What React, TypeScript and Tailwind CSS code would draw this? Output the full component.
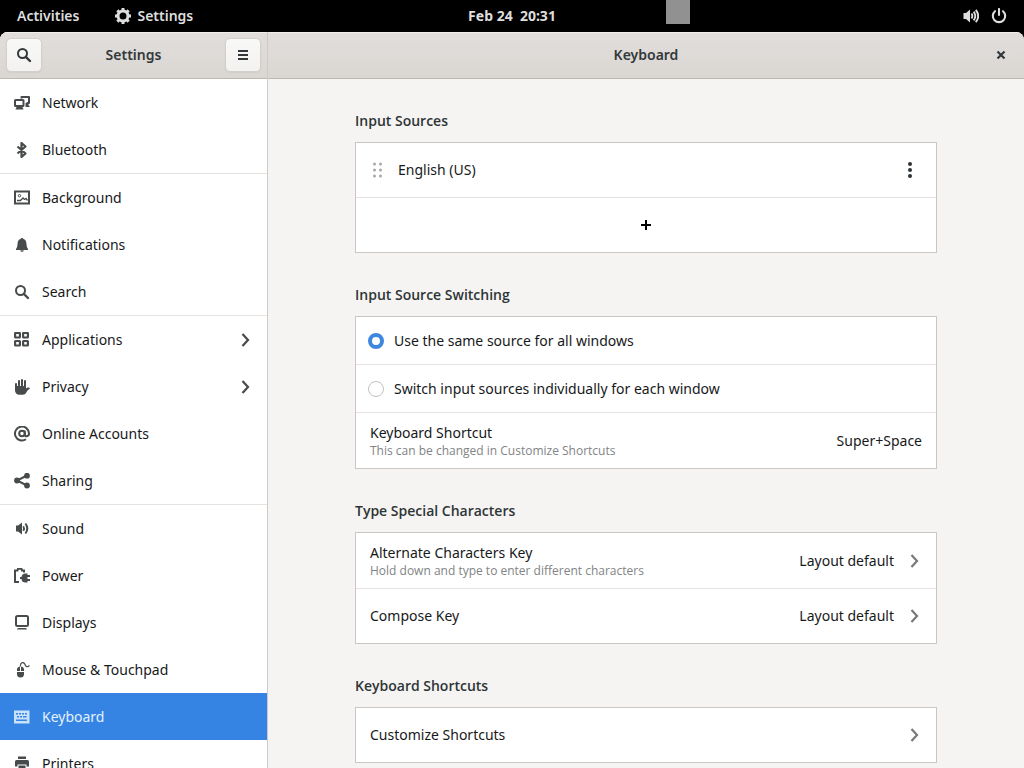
import { useState } from 'react';
import type { ReactNode } from 'react';

type IconProps = { children: ReactNode; className?: string };

function Icon({ children, className = '' }: IconProps) {
    return (
        <svg viewBox="0 0 16 16" width="16" height="16" fill="currentColor" aria-hidden="true" className={`shrink-0 ${className}`}>
            {children}
        </svg>
    );
}

const searchShape = (
    <>
        <circle cx="6.5" cy="6.5" r="4.5" fill="none" stroke="currentColor" strokeWidth="2" />
        <path d="M9.8 9.8l4.2 4.2" fill="none" stroke="currentColor" strokeWidth="2.4" strokeLinecap="round" />
    </>
);

const chevronShape = <path d="M5.5 2l5.500 6-5.500 6" fill="none" stroke="currentColor" strokeWidth="2.200" />;

const volumeShape = (
    <>
        <path d="M0.500 5H3L7 1.500v13L3 11H0.500z" />
        <path d="M8.500 5.500q1.800 2.500 0 5" fill="none" stroke="currentColor" strokeWidth="1.800" />
        <path d="M10.700 3.600q3.200 4.400 0 8.800M12.800 1.800q4.800 6.200 0 12.400" fill="none" stroke="currentColor" strokeWidth="1.900" />
    </>
);

const icons: Record<string, ReactNode> = {
    network: (
        <>
            <path d="M7.500 3.500V2H15v6h-2.500" fill="none" stroke="currentColor" strokeWidth="2" strokeLinejoin="round" />
            <path d="M11.500 8h3v2l1.500 2h-4.500z" />
            <rect x="1" y="5" width="8.500" height="6" rx="0.600" fill="none" stroke="currentColor" strokeWidth="2" />
            <path d="M3 11h5l1.500 3.500h-8z" />
        </>
    ),
    bluetooth: (
        <path d="M3.500 4.500l8 7L7.500 15V1l4 3.500-8 7" fill="none" stroke="currentColor" strokeWidth="2.200" strokeLinejoin="round" />
    ),
    background: (
        <>
            <path fillRule="evenodd" d="M0 0.500h16v14H0zM2 2.500v10h12v-10z" />
            <circle cx="5.500" cy="5.700" r="1.200" fill="none" stroke="currentColor" />
            <path d="M3 10.500h3.500L9 8l1.500 1.500 1.500-1 1.500 2" fill="none" stroke="currentColor" strokeWidth="1.300" />
        </>
    ),
    notifications: (
        <path d="M8 1a1.500 1.500 0 0 0-1.500 1C4 2.800 3.700 5 3.500 7.300 3.300 9.600 3 11 2 12v1h12v-1c-1-1-1.300-2.400-1.500-4.700C12.300 5 12 2.800 9.500 2A1.500 1.500 0 0 0 8 1zM6.300 13.300a1.700 1.500 0 0 0 3.400 0z" />
    ),
    search: searchShape,
    applications: (
        <g fill="none" stroke="currentColor" strokeWidth="2.200">
            <rect x="1.100" y="1" width="4.800" height="4.500" rx="0.400" />
            <rect x="9.100" y="1" width="4.800" height="4.500" rx="0.400" />
            <rect x="1.100" y="9" width="4.800" height="4.500" rx="0.400" />
            <rect x="9.100" y="9" width="4.800" height="4.500" rx="0.400" />
        </g>
    ),
    privacy: (
        <>
            <path d="M2 5V11M5 2V9M8 1V9M11 2V10" fill="none" stroke="currentColor" strokeWidth="2" strokeLinecap="round" />
            <path d="M1 7H12v2.500c1-1 2.300-1.400 3.500-.8.600.3.500 1 0 1.200-1.700.7-2.300 2-3.300 3.800-.7 1.300-1.800 2-3.400 2H5.500c-2.800 0-4.500-1.800-4.500-4.500z" />
        </>
    ),
    accounts: (
        <>
            <circle cx="8" cy="7.500" r="2.800" fill="none" stroke="currentColor" strokeWidth="2" />
            <path d="M10.800 4.500v4.200c0 2.600 4.200 2 4.200-1.200a7 7 0 1 0-3 5.800" fill="none" stroke="currentColor" strokeWidth="2" />
        </>
    ),
    sharing: (
        <>
            <path d="M13 2.500l-10 5 10 5" fill="none" stroke="currentColor" strokeWidth="2" />
            <circle cx="13" cy="2.700" r="2.900" />
            <circle cx="3" cy="7.500" r="2.900" />
            <circle cx="13" cy="12.500" r="2.900" />
        </>
    ),
    sound: (
        <>
            <path d="M2 4.500h2L8 1.500v12l-4-3H2z" />
            <path d="M9.300 5.200q1.500 2.300 0 4.600" fill="none" stroke="currentColor" strokeWidth="1.800" />
            <path d="M11.400 2.500q3.800 5 0 10" fill="none" stroke="currentColor" strokeWidth="2" />
        </>
    ),
    power: (
        <>
            <path d="M5 14H1V2.500h2.500L4 0.800h3.500L8 2.500h2V4.500" fill="none" stroke="currentColor" strokeWidth="2" />
            <path d="M13.500 5.500v9h-2a4 4 0 0 1-4-3.500H6V9h1.500a4 4 0 0 1 4-3.500z" />
            <path d="M13 7h3v2h-3zM13 11h3v2h-3z" />
        </>
    ),
    displays: (
        <>
            <rect x="2" y="1" width="12" height="10" rx="1.500" fill="none" stroke="currentColor" strokeWidth="2" />
            <path d="M4.500 13h7q1.500 0 1.500 1.500H3q0-1.500 1.500-1.500z" />
        </>
    ),
    mouse: (
        <>
            <path d="M3 9V7.500Q3 5 6 4.500V9zM7 4.500q3 .5 3 3V9H7zM3 10h7v2a3.500 3.500 0 0 1-7 0z" />
            <path d="M6.500 4.500C6 0 10 -0.500 11 2.500c.8 2.500 2.500 3 4.500 1" fill="none" stroke="currentColor" strokeWidth="1.200" />
        </>
    ),
    keyboard: (
        <path
            fillRule="evenodd"
            d="M0 1.500h15.500v13H0zM2 4v1.500h2V4zm3 0v1.500h2V4zm3 0v1.500h2V4zm3 0v1.500h2V4zM3 7v1.500h2V7zm3 0v1.500h2V7zm3 0v1.500h3.500V7zM2 10.500V12h11v-1.500z"
        />
    ),
    printers: (
        <path d="M4 0.500h8V3H4zM2.500 4h11A1.500 1.500 0 0 1 15 5.500v5h-2.500v-2h-9v2H1v-5A1.500 1.500 0 0 1 2.500 4zM4.500 9.500h7v5h-7z" />
    ),
};

const groups = [
    [
        { id: 'network', label: 'Network' },
        { id: 'bluetooth', label: 'Bluetooth' },
    ],
    [
        { id: 'background', label: 'Background' },
        { id: 'notifications', label: 'Notifications' },
        { id: 'search', label: 'Search' },
    ],
    [
        { id: 'applications', label: 'Applications', sub: true },
        { id: 'privacy', label: 'Privacy', sub: true },
        { id: 'accounts', label: 'Online Accounts' },
        { id: 'sharing', label: 'Sharing' },
    ],
    [
        { id: 'sound', label: 'Sound' },
        { id: 'power', label: 'Power' },
        { id: 'displays', label: 'Displays' },
        { id: 'mouse', label: 'Mouse & Touchpad' },
        { id: 'keyboard', label: 'Keyboard' },
        { id: 'printers', label: 'Printers' },
    ],
] as { id: string; label: string; sub?: boolean }[][];

function TopBar() {
    return (
        <header className="relative grid h-8 shrink-0 grid-cols-[1fr_auto_1fr] items-center bg-black px-[17px] font-semibold text-[#dedede]">
            <div className="flex items-center gap-9">
                <button>Activities</button>
                <button className="flex items-center gap-1.5">
                    <Icon>
                        <circle cx="8" cy="8" r="5" fill="none" stroke="currentColor" strokeWidth="3" />
                        <path
                            d="M8 0v3M8 13v3M0 8h3M13 8h3M2.340 2.340l2 2M11.660 11.660l2 2M2.340 13.660l2-2M11.660 4.340l2-2"
                            stroke="currentColor"
                            strokeWidth="3"
                        />
                    </Icon>
                    Settings
                </button>
            </div>
            <button className="font-bold whitespace-pre">Feb 24  20:31</button>
            <div className="flex items-center justify-end gap-3">
                <button aria-label="Volume"><Icon>{volumeShape}</Icon></button>
                <button aria-label="Power">
                    <Icon>
                        <path d="M4 3.200A6.200 6.200 0 1 0 12 3.200" fill="none" stroke="currentColor" strokeWidth="2.100" strokeLinecap="round" />
                        <path d="M8 1v6" stroke="currentColor" strokeWidth="2.100" strokeLinecap="round" />
                    </Icon>
                </button>
            </div>
            <div className="absolute top-0 left-[65%] h-6 w-6 bg-[#919191]" />
        </header>
    );
}

function HeaderButton({ label, children }: { label: string; children: ReactNode }) {
    return (
        <button
            aria-label={label}
            className="flex h-[34px] w-9 items-center justify-center rounded-[5px] border border-[#d3cfcb] bg-gradient-to-b from-[#f8f8f7] to-[#f3f2f1] shadow-xs"
        >
            <Icon>{children}</Icon>
        </button>
    );
}

function Section({ title, children }: { title: string; children: ReactNode }) {
    return (
        <section>
            <h2 className="mb-[11px] font-['Open_Sans',sans-serif] font-semibold text-[#2e3436]">{title}</h2>
            <div className="grid gap-px border border-[#c9c6c3] bg-[#e3e2e1] *:bg-white">{children}</div>
        </section>
    );
}

type RowProps = { title: string; hint?: string; value?: string; link?: boolean };

function Row({ title, hint, value, link }: RowProps) {
    const Tag = link ? 'button' : 'div';
    return (
        <Tag className={`flex w-full items-center gap-3 px-3.5 text-left ${hint ? 'h-[55px]' : 'h-[54px]'}`}>
            <span className="flex-1">
                <span className="block">{title}</span>
                {hint && <span className="block font-['Open_Sans',sans-serif] text-xs text-[#818485]">{hint}</span>}
            </span>
            {value && <span>{value}</span>}
            {link && <Icon className="text-[#76797b]">{chevronShape}</Icon>}
        </Tag>
    );
}

const modes = [
    { id: 'same', label: 'Use the same source for all windows' },
    { id: 'each', label: 'Switch input sources individually for each window' },
];

export default function App() {
    const [page, setPage] = useState('keyboard');
    const [mode, setMode] = useState('same');

    return (
        <div className="flex h-screen flex-col overflow-hidden bg-black font-['Noto_Sans',sans-serif] text-sm text-[#17191a]">
            <TopBar />

            <div className="flex min-h-0 flex-1 overflow-hidden rounded-t-lg bg-[#f5f4f2]">
                {/* Sidebar */}
                <aside className="flex w-[268px] shrink-0 flex-col border-r border-[#cdcac7] bg-white">
                    <div className="flex h-[47px] shrink-0 items-center border-b border-[#bfb8b1] bg-gradient-to-b from-[#e0dddb] to-[#dad7d3] px-1.5 text-[#33383a] inset-shadow-[0_1px_#efefed]">
                        <HeaderButton label="Search">{searchShape}</HeaderButton>
                        <h1 className="flex-1 text-center font-semibold">Settings</h1>
                        <HeaderButton label="Menu">
                            <path d="M3 3h10v2H3zM3 7h10v2H3zM3 11h10v2H3z" />
                        </HeaderButton>
                    </div>
                    <nav className="min-h-0 flex-1 divide-y divide-[#e3e2e1] overflow-y-auto [scrollbar-width:none]">
                        {groups.map((group, i) => (
                            <div key={i}>
                                {group.map((item) => (
                                    <a
                                        key={item.id}
                                        href={`#${item.id}`}
                                        onClick={() => setPage(item.id)}
                                        className={`flex h-[47px] items-center gap-3 px-3.5 ${page === item.id ? 'bg-[#3584e4] text-[#e3f1ff]' : ''}`}
                                    >
                                        <Icon className={page === item.id ? 'text-[#c9e2fb]' : 'text-[#484b4c]'}>{icons[item.id]}</Icon>
                                        <span className="flex-1">{item.label}</span>
                                        {item.sub && <Icon className="text-[#484b4c]">{chevronShape}</Icon>}
                                    </a>
                                ))}
                            </div>
                        ))}
                    </nav>
                </aside>

                {/* Panel */}
                <div className="flex min-w-0 flex-1 flex-col">
                    <div className="grid h-[47px] shrink-0 grid-cols-[1fr_auto_1fr] items-center border-b border-[#bfb8b1] bg-gradient-to-b from-[#e0dddb] to-[#dad7d3] px-[15px] text-[#33383a] inset-shadow-[0_1px_#efefed]">
                        <h1 className="col-start-2 font-semibold">Keyboard</h1>
                        <button aria-label="Close" className="justify-self-end">
                            <Icon>
                                <path d="M4.500 4.500l7 7M11.500 4.500l-7 7" stroke="currentColor" strokeWidth="2.200" />
                            </Icon>
                        </button>
                    </div>
                    <main className="min-h-0 flex-1 overflow-y-auto px-6 py-8 [scrollbar-width:none]">
                        <div className="mx-auto flex max-w-[582px] flex-col gap-8">
                            <Section title="Input Sources">
                                <div className="flex h-[54px] items-center gap-3 pr-[18px] pl-3.5">
                                    <Icon className="text-[#a5a7a8]">
                                        <circle cx="4.500" cy="2" r="1.500" />
                                        <circle cx="10.500" cy="2" r="1.500" />
                                        <circle cx="4.500" cy="8" r="1.500" />
                                        <circle cx="10.500" cy="8" r="1.500" />
                                        <circle cx="4.500" cy="14" r="1.500" />
                                        <circle cx="10.500" cy="14" r="1.500" />
                                    </Icon>
                                    <span className="flex-1">English (US)</span>
                                    <button aria-label="Source options" className="text-[#2e3436]">
                                        <Icon>
                                            <circle cx="8" cy="2" r="2" />
                                            <circle cx="8" cy="8" r="2" />
                                            <circle cx="8" cy="14" r="2" />
                                        </Icon>
                                    </button>
                                </div>
                                <button aria-label="Add input source" className="flex h-[54px] w-full items-center justify-center text-black">
                                    <Icon>
                                        <path d="M7 3h2v4h4v2H9v4H7V9H3V7h4z" />
                                    </Icon>
                                </button>
                            </Section>

                            <Section title="Input Source Switching">
                                {modes.map((m) => (
                                    <label key={m.id} className="flex h-[47px] items-center gap-2.5 px-3">
                                        <input
                                            type="radio"
                                            name="mode"
                                            checked={mode === m.id}
                                            onChange={() => setMode(m.id)}
                                            className="h-4 w-4 appearance-none rounded-full border border-[#c5c1bd] bg-white checked:border-4 checked:border-[#3d87dd]"
                                        />
                                        {m.label}
                                    </label>
                                ))}
                                <Row title="Keyboard Shortcut" hint="This can be changed in Customize Shortcuts" value="Super+Space" />
                            </Section>

                            <Section title="Type Special Characters">
                                <Row title="Alternate Characters Key" hint="Hold down and type to enter different characters" value="Layout default" link />
                                <Row title="Compose Key" value="Layout default" link />
                            </Section>

                            <Section title="Keyboard Shortcuts">
                                <Row title="Customize Shortcuts" link />
                            </Section>
                        </div>
                    </main>
                </div>
            </div>
        </div>
    );
}
